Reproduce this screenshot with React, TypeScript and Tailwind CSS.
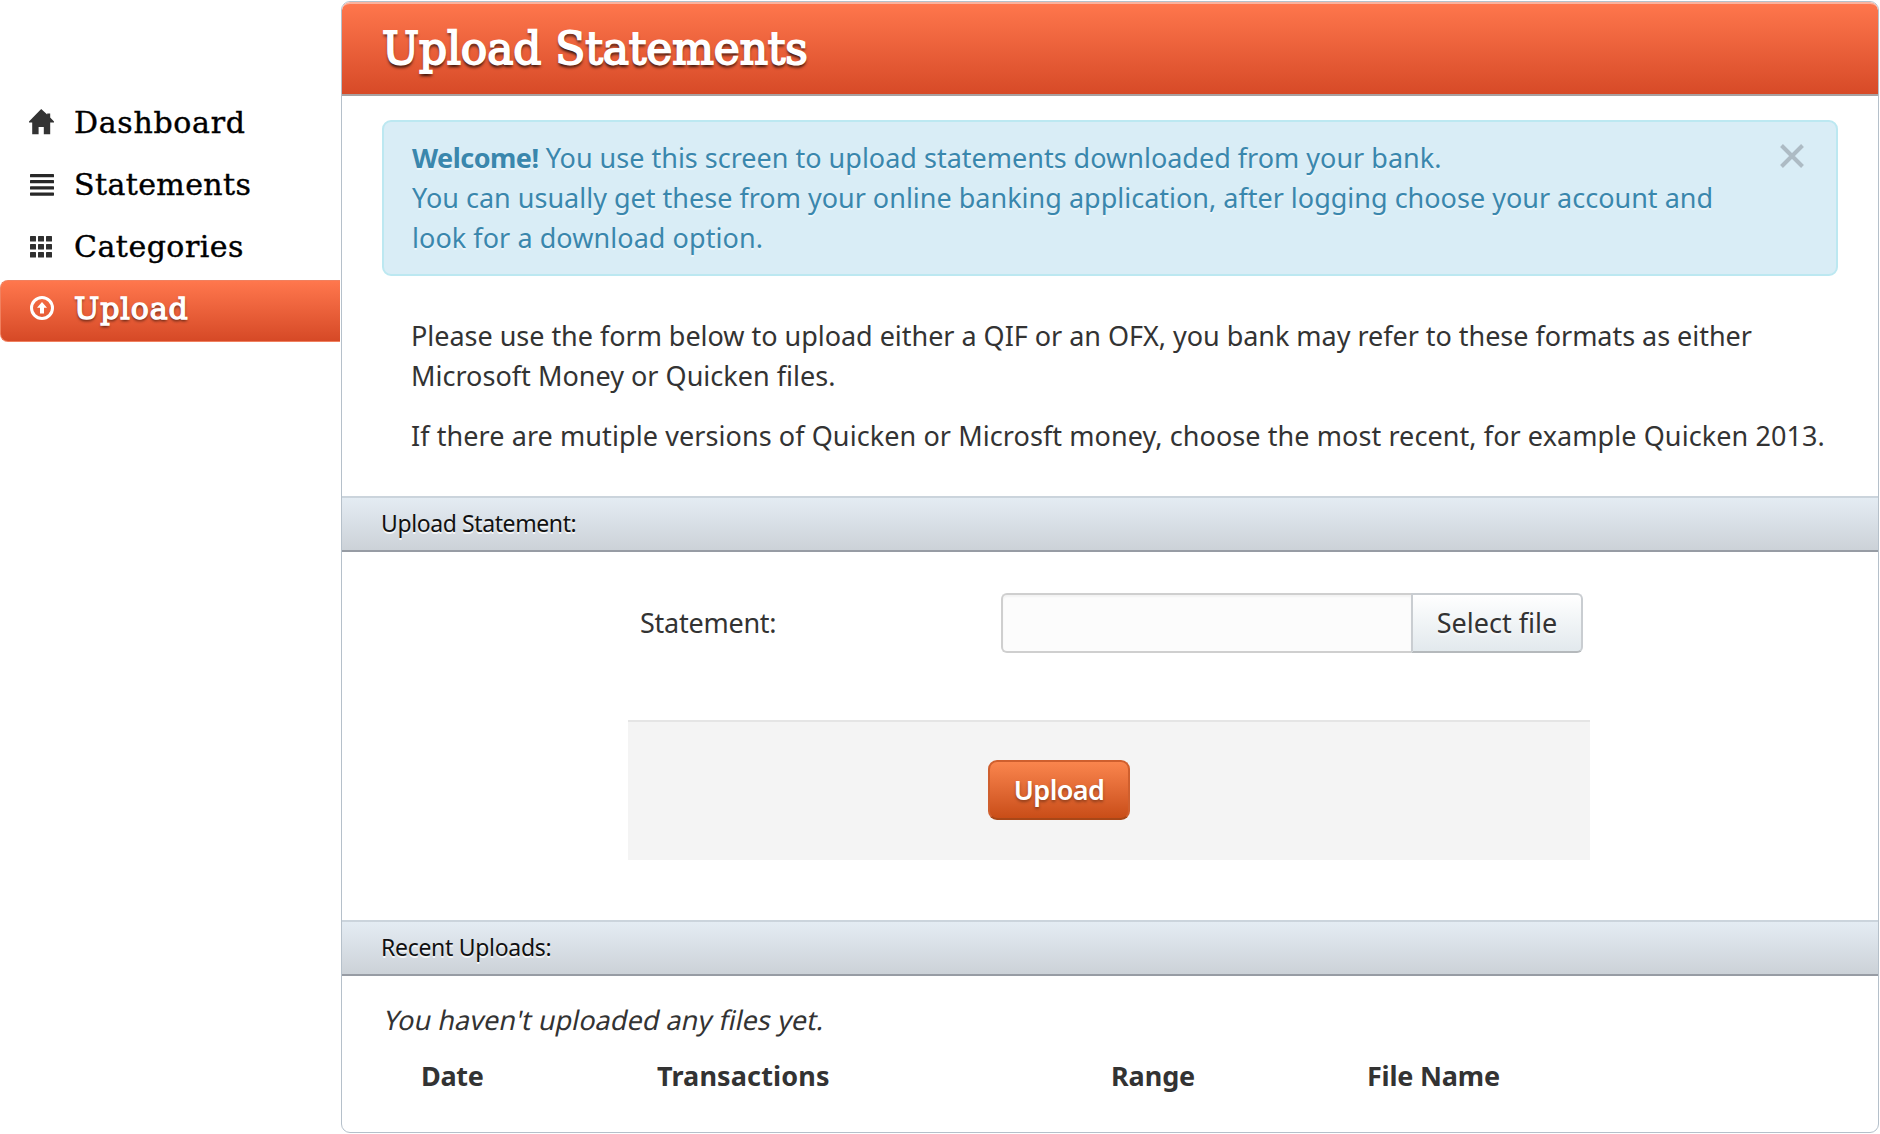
import type { ReactNode } from "react";

const HomeIcon = () => (
  <svg width="26" height="26" viewBox="0 0 26 26" fill="#333">
    <path d="M12.2 0 L18.2 5.6 V4.4 H21.2 V8.4 L25 12.4 V13.4 H21.2 V25.2 H14.8 V18 H9.6 V25.2 H3.2 V13.4 H0 V12.4 Z" />
  </svg>
);

const ListIcon = () => (
  <svg width="26" height="26" viewBox="0 0 26 26" fill="#282828">
    {[3, 9, 15.2, 21.4].map((y) => (
      <rect key={y} x="1" y={y} width="24" height="3.3" rx="0.6" />
    ))}
  </svg>
);

const GridIcon = () => (
  <svg width="26" height="26" viewBox="0 0 26 26" fill="#303030">
    {[3, 11, 19].map((y) =>
      [1, 9, 17].map((x) => <rect key={`${x}-${y}`} x={x} y={y} width="6" height="5.4" rx="0.5" />),
    )}
  </svg>
);

const UploadIcon = () => (
  <svg width="26" height="26" viewBox="0 0 26 26">
    <circle cx="13" cy="13" r="10.5" fill="none" stroke="#fff" strokeWidth="3" />
    <path d="M13 7 L18 12.8 H15 V18.6 H11 V12.8 H8 Z" fill="#fff" />
  </svg>
);

function NavItem({ icon, label, spacing }: { icon: ReactNode; label: string; spacing: string }) {
  return (
    <a className="flex h-[62px] items-start pl-[29px]">
      <span className="mt-[15px] w-[45px]">{icon}</span>
      <span className={`text-[30px] leading-[58px] text-black [-webkit-text-stroke:0.4px_#000] ${spacing}`}>{label}</span>
    </a>
  );
}

function SectionBar({ children, className }: { children: ReactNode; className: string }) {
  return (
    <h2
      className={`h-[56px] border-y-2 border-t-[#cbd4dc] border-b-[#979ca4] bg-linear-to-b from-[#e4ecf3] to-[#ccd2d8] pl-[39px] text-[23px] leading-[50px] text-[#111] [text-shadow:0_2px_0_rgba(255,255,255,0.75)] ${className}`}
    >
      {children}
    </h2>
  );
}

export default function App() {
  return (
    <div className="flex h-[1134px] w-[1880px] overflow-hidden bg-white font-['Noto_Sans',sans-serif] text-[27px] leading-[40px] text-[#333]">
      <nav className="w-[341px] shrink-0 pt-[94px] font-['DejaVu_Serif',serif]">
        <NavItem icon={<HomeIcon />} label="Dashboard" spacing="tracking-[0.7px]" />
        <NavItem icon={<ListIcon />} label="Statements" spacing="tracking-[0.4px]" />
        <NavItem icon={<GridIcon />} label="Categories" spacing="tracking-[0.5px]" />
        <a className="flex h-[62px] w-[340px] items-start rounded-l-[8px] border border-r-0 border-[#f0805f] bg-linear-to-b from-[#ff774d] to-[#d64926] pl-[28px]">
          <span className="mt-[14px] w-[45px]">
            <UploadIcon />
          </span>
          <span className="text-[30px] leading-[56px] tracking-[0.9px] text-white [-webkit-text-stroke:1.3px_#fff] [text-shadow:0_2px_3px_rgba(0,0,0,0.7)]">
            Upload
          </span>
        </a>
      </nav>

      <main className="mt-px h-[1132px] w-[1538px] shrink-0 overflow-hidden rounded-[9px] border border-[#b5c0ca] bg-white">
        <header className="h-[94px] rounded-t-[8px] border-t-2 border-b-2 border-t-[#fbb29d] border-b-[#a8a1a1] bg-linear-to-b from-[#ff774d] to-[#d64926] bg-origin-border pl-[40px]">
          <h1 className="font-['DejaVu_Serif',serif] text-[44px] leading-[89px] tracking-[-0.15px] text-white [-webkit-text-stroke:1.8px_#fff] [text-shadow:0_3px_3px_rgba(0,0,0,0.8)]">
            Upload Statements
          </h1>
        </header>

        <div className="mt-[24px] ml-[40px] flex h-[156px] w-[1456px] justify-between rounded-[9px] border-2 border-[#bce8f1] bg-[#d9edf6] pt-[16px] pl-[28px] whitespace-nowrap text-[#3a87ad] [text-shadow:0_2px_0_rgba(255,255,255,0.5)]">
          <div>
            <p>
              <b className="tracking-[-0.5px]">Welcome!</b> You use this screen to upload statements downloaded from your bank.
            </p>
            <p>You can usually get these from your online banking application, after logging choose your account and</p>
            <p className="tracking-[0.06px]">look for a download option.</p>
          </div>
          <svg className="mt-[6px] mr-[32px]" width="24" height="24" viewBox="0 0 24 24" stroke="#adbbc4" strokeWidth="4">
            <path d="M1.5 1.5 L22.5 22.5 M22.5 1.5 L1.5 22.5" />
          </svg>
        </div>

        <div className="mt-[40px] ml-[69px] whitespace-nowrap">
          <p className="tracking-[-0.03px]">
            Please use the form below to upload either a QIF or an OFX, you bank may refer to these formats as either
          </p>
          <p className="tracking-[0.02px]">Microsoft Money or Quicken files.</p>
          <p className="mt-[20px] tracking-[0.08px]">
            If there are mutiple versions of Quicken or Microsft money, choose the most recent, for example Quicken 2013.
          </p>
        </div>

        <SectionBar className="mt-[40px] tracking-[-0.4px]">Upload Statement:</SectionBar>

        <form className="ml-[286px] w-[962px]">
          <div className="mt-[41px] flex h-[60px] leading-[60px]">
            <label className="w-[373px] pl-[12px] tracking-[-0.25px]">Statement:</label>
            <div className="w-[410px] rounded-l-[6px] border-2 border-r-0 border-[#cfcfcf] bg-[#fcfcfc] shadow-[inset_0_2px_2px_rgba(0,0,0,0.04)]" />
            <div className="w-[172px] rounded-r-[6px] border-2 border-[#c9cdd1] border-b-[#b5b9bc] bg-linear-to-b from-white to-[#e2e9ed] text-center leading-[56px] [text-shadow:0_2px_2px_rgba(255,255,255,0.75)]">
              Select file
            </div>
          </div>
          <div className="mt-[67px] h-[140px] border-t-2 border-[#e5e5e5] bg-[#f4f4f4] pt-[38px] pl-[360px]">
            <div className="h-[60px] w-[142px] rounded-[9px] border-2 border-[#cf5f2e] border-b-[#a84718] bg-linear-to-b from-[#fa854d] to-[#c94d17] text-center leading-[56px] font-semibold tracking-[-0.6px] text-white [text-shadow:0_2px_3px_rgba(0,0,0,0.35)]">
              Upload
            </div>
          </div>
        </form>

        <SectionBar className="mt-[60px] tracking-[-0.3px]">Recent Uploads:</SectionBar>

        <p className="mt-[24px] ml-[43px] w-fit -skew-x-12 tracking-[0.05px]">You haven't uploaded any files yet.</p>
        <div className="mt-[16px] ml-[79px] grid grid-cols-[236px_454px_256px_200px] font-bold">
          <span className="tracking-[-0.3px]">Date</span>
          <span className="tracking-[0.15px]">Transactions</span>
          <span className="tracking-[-0.1px]">Range</span>
          <span className="tracking-[-0.2px]">File Name</span>
        </div>
      </main>
    </div>
  );
}
